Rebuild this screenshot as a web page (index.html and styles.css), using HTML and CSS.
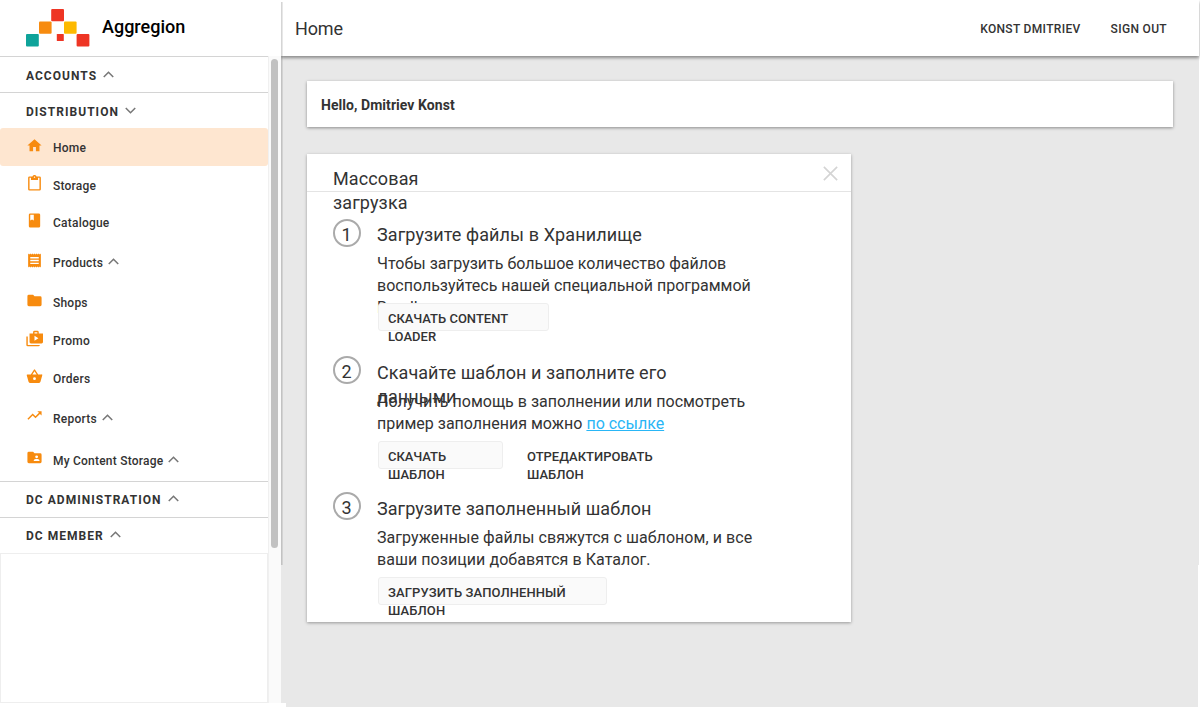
FILE: index.html
```html
<!DOCTYPE html>
<html lang="ru">
<head>
<meta charset="utf-8">
<title>Aggregion</title>
<link rel="stylesheet" href="styles.css">
</head>
<body>
<div class="app">
  <aside class="sidebar">
    <div class="brand">
      <svg class="brand-mark" width="64" height="38" viewBox="0 0 64 38">
        <rect x="25.2" y="0" width="12.8" height="12.3" rx="1" fill="#ee3524"/>
        <rect x="13" y="12.5" width="12.6" height="12.3" rx="1" fill="#f78b0f"/>
        <rect x="38" y="12.5" width="12.6" height="12.3" rx="1" fill="#fdb900"/>
        <rect x="0" y="25" width="12.8" height="12.6" rx="1" fill="#0fa39a"/>
        <rect x="30.8" y="25" width="7" height="7" rx="0.6" fill="#ee3524"/>
        <rect x="50.6" y="25" width="12.8" height="12.6" rx="1" fill="#ee3524"/>
      </svg>
      <span class="brand-name">Aggregion</span>
    </div>
    <div class="side-body">
      <nav class="nav">
        <div class="group">ACCOUNTS <svg class="chev" viewBox="0 0 10 6"><path d="M.7 5.3 5 1 9.3 5.3"/></svg></div>
        <div class="group">DISTRIBUTION <svg class="chev" viewBox="0 0 10 6"><path d="M.7.7 5 5 9.3.7"/></svg></div>
        <div class="item active"><svg class="ico" viewBox="0 0 24 24"><path d="M10 20v-6h4v6h5v-8h3L12 3 2 12h3v8z"/></svg>Home</div>
        <div class="item"><svg class="ico" viewBox="0 0 24 24"><path d="M19 2h-4.18C14.4.84 13.3 0 12 0S9.6.84 9.18 2H5a2 2 0 0 0-2 2v16a2 2 0 0 0 2 2h14a2 2 0 0 0 2-2V4a2 2 0 0 0-2-2zm-7 0a1 1 0 1 1 0 2 1 1 0 0 1 0-2zm7 18H5V4h2v3h10V4h2z"/></svg>Storage</div>
        <div class="item"><svg class="ico" viewBox="0 0 24 24"><path d="M18 2H6a2 2 0 0 0-2 2v16a2 2 0 0 0 2 2h12a2 2 0 0 0 2-2V4a2 2 0 0 0-2-2zM6 4h5v8l-2.500-1.500L6 12z"/></svg>Catalogue</div>
        <div class="item tall"><svg class="ico" viewBox="0 0 24 24"><path d="M18 17H6v-2h12zm0-4H6v-2h12zm0-4H6V7h12zM3 22l1.500-1.500L6 22l1.500-1.500L9 22l1.500-1.500L12 22l1.500-1.500L15 22l1.500-1.500L18 22l1.500-1.500L21 22V2l-1.500 1.500L18 2l-1.500 1.500L15 2l-1.500 1.500L12 2l-1.500 1.500L9 2 7.500 3.500 6 2 4.500 3.500 3 2z"/></svg>Products <svg class="chev" viewBox="0 0 10 6"><path d="M.7 5.300 5 1 9.300 5.300"/></svg></div>
        <div class="item"><svg class="ico" viewBox="0 0 24 24"><path d="M10 4H4a2 2 0 0 0-2 2v12a2 2 0 0 0 2 2h16a2 2 0 0 0 2-2V8a2 2 0 0 0-2-2h-8z"/></svg>Shops</div>
        <div class="item"><svg class="ico" viewBox="0 0 24 24"><path d="M2.500 9H.5v12a2 2 0 0 0 2 2h15a2 2 0 0 0 2-2h-17zM18 5V3a2 2 0 0 0-2-2h-4a2 2 0 0 0-2 2v2H5v12a2 2 0 0 0 2 2h15a2 2 0 0 0 2-2V5zm-6-2h4v2h-4zm0 12V8l5.500 3.500z"/></svg>Promo</div>
        <div class="item"><svg class="ico" viewBox="0 0 24 24"><path d="m17.210 9-4.380-6.560a1 1 0 0 0-1.660 0L6.790 9H2a1 1 0 0 0-.96 1.270l2.540 9.270A2 2 0 0 0 5.500 21h13a2 2 0 0 0 1.930-1.460l2.540-9.270A1 1 0 0 0 22 9zM9 9l3-4.400L15 9zm3 8a2 2 0 1 1 0-4 2 2 0 0 1 0 4z"/></svg>Orders</div>
        <div class="item tall"><svg class="ico" viewBox="0 0 24 24"><path d="m16 6 2.290 2.290-4.880 4.880-4-4L2 16.590 3.410 18l6-6 4 4 6.300-6.290L22 12V6z"/></svg>Reports <svg class="chev" viewBox="0 0 10 6"><path d="M.7 5.300 5 1 9.300 5.300"/></svg></div>
        <div class="item tall"><svg class="ico" viewBox="0 0 24 24"><path d="M20 6h-8l-2-2H4a2 2 0 0 0-2 2v12a2 2 0 0 0 2 2h16a2 2 0 0 0 2-2V8a2 2 0 0 0-2-2zm-5 3a2 2 0 1 1 0 4 2 2 0 0 1 0-4zm4 8h-8v-1c0-1.330 2.670-2 4-2s4 .67 4 2z"/></svg>My Content Storage <svg class="chev" viewBox="0 0 10 6"><path d="M.7 5.300 5 1 9.300 5.300"/></svg></div>
        <div class="group">DC ADMINISTRATION <svg class="chev" viewBox="0 0 10 6"><path d="M.7 5.300 5 1 9.300 5.300"/></svg></div>
        <div class="group">DC MEMBER <svg class="chev" viewBox="0 0 10 6"><path d="M.7 5.300 5 1 9.300 5.300"/></svg></div>
        <div class="blank"></div>
      </nav>
      <div class="track"><div class="thumb"></div></div>
    </div>
    <div class="edge-shadow"></div>
    <div class="corner"></div>
  </aside>
  <div class="main">
    <header class="topbar">
      <h1 class="page-title">Home</h1>
      <div class="user-links"><span>KONST DMITRIEV</span><span>SIGN OUT</span></div>
    </header>
    <main class="content-area">
      <section class="hello">Hello, Dmitriev Konst</section>
      <section class="card">
        <header class="card-head">
          <h2 class="card-title">Массовая загрузка</h2>
          <svg class="close" viewBox="0 0 14 14"><path d="M.8.8 13.200 13.200M13.200.8.8 13.200"/></svg>
        </header>
        <div class="step first">
          <div class="num">1</div>
          <div class="step-body">
            <h3 class="step-title">Загрузите файлы в Хранилище</h3>
            <p class="step-text">Чтобы загрузить большое количество файлов воспользуйтесь нашей специальной программой Bundle</p>
            <div class="actions"><div class="btn b1">СКАЧАТЬ CONTENT LOADER</div></div>
          </div>
        </div>
        <div class="step">
          <div class="num">2</div>
          <div class="step-body">
            <h3 class="step-title">Скачайте шаблон и заполните его данными</h3>
            <p class="step-text">Получить помощь в заполнении или посмотреть пример заполнения можно <a class="link">по ссылке</a></p>
            <div class="actions"><div class="btn b2">СКАЧАТЬ ШАБЛОН</div><div class="btn flat">ОТРЕДАКТИРОВАТЬ ШАБЛОН</div></div>
          </div>
        </div>
        <div class="step last">
          <div class="num">3</div>
          <div class="step-body">
            <h3 class="step-title">Загрузите заполненный шаблон</h3>
            <p class="step-text">Загруженные файлы свяжутся с шаблоном, и все ваши позиции добавятся в Каталог.</p>
            <div class="actions"><div class="btn b3">ЗАГРУЗИТЬ ЗАПОЛНЕННЫЙ ШАБЛОН</div></div>
          </div>
        </div>
      </section>
    </main>
  </div>
</div>
</body>
</html>
```
FILE: styles.css
```css
* { box-sizing: border-box; }
body { margin: 0; font-family: Roboto, sans-serif; color: #333; background: #fff; }
.app { display: flex; width: 1200px; height: 708px; overflow: hidden; }

.sidebar { position: relative; display: flex; flex-direction: column; width: 281px; height: 708px; background: #fff; }
.brand { display: flex; height: 56px; padding: 9px 0 0 26px; }
.brand-mark { flex: none; }
.brand-name { margin-left: 12px; font-size: 18px; font-weight: 500; line-height: 36px; color: #000; }
.side-body { display: flex; height: 647px; }
.nav { display: flex; flex-direction: column; width: 268px; }
.group { display: flex; flex: none; align-items: center; height: 36px; padding: 3px 0 0 26px; border-top: 1px solid #d4d4d4; font-size: 12px; font-weight: 700; letter-spacing: 1.03px; }
.item + .group, .item ~ .group { padding-top: 2px; }
.chev { width: 11px; height: 7px; margin: -3px 0 0 6px; fill: none; stroke: #777; stroke-width: 1.4; }
.item { display: flex; flex: none; align-items: center; height: 37.8px; padding: 2px 0 0 26px; font-size: 12px; font-weight: 500; letter-spacing: 0.22px; }
.item.tall { height: 42px; }
.item .chev { margin-left: 5px; }
.ico { width: 17px; height: 17px; margin: -5px 10px 0 0; fill: #f78b0f; }
.tall .ico { margin-top: -6px; }
.active { border-radius: 3px; background: #fee6d0; }
.blank { flex: 1; border: 1px solid #eee; }
.track { width: 13px; padding: 3px 3px 0 2px; background: #fafafa; border-left: 1px solid #f0f0f0; }
.thumb { width: 7px; height: 489px; border-radius: 4px; background: #c1c1c1; }
.edge-shadow { position: absolute; left: 281px; top: 2px; width: 2px; height: 563px; background: linear-gradient(90deg, rgba(0,0,0,.2), rgba(0,0,0,.06)); z-index: 2; }
.corner { position: absolute; left: 268px; top: 703px; width: 18px; height: 5px; background: #fff; z-index: 2; }

.main { display: flex; flex-direction: column; width: 918px; height: 707px; background: linear-gradient(#fff, #fff) right bottom / 1px 142px no-repeat #e8e8e8; }
.topbar { display: flex; justify-content: space-between; align-items: center; height: 56px; padding: 0 32px 0 14px; background: #fff; box-shadow: 0 2px 3px rgba(0,0,0,.4); }
.page-title { margin: 2px 0 0; font-size: 18px; font-weight: 400; line-height: 22px; letter-spacing: -0.15px; }
.user-links { display: flex; gap: 30px; padding-top: 1px; font-size: 12px; font-weight: 500; letter-spacing: 0.33px; }
.content-area { padding: 25px 26px; }
.hello { height: 46px; padding-left: 14px; background: #fff; font-size: 14px; font-weight: 700; line-height: 48px; letter-spacing: 0.05px; box-shadow: 0 1px 3px rgba(0,0,0,.4); }
.card { width: 544px; height: 468px; margin-top: 27px; background: #fff; box-shadow: 0 1px 3px rgba(0,0,0,.35); }
.card-head { display: flex; justify-content: space-between; height: 38px; padding: 12px 13px 0 26px; border-bottom: 1px solid #e4e4e4; }
.card-title { width: 100px; margin: 0; padding-top: 1px; font-size: 18px; font-weight: 400; line-height: 24px; letter-spacing: 0.12px; }
.close { flex: none; width: 15px; height: 15px; fill: none; stroke: #d4d4d4; stroke-width: 1.5; }
.step { display: flex; height: 136px; padding-left: 25.5px; }
.step.first { height: 164px; padding-top: 27px; }
.num { width: 28px; height: 28px; border: 2px solid #aaa; border-radius: 50%; font-size: 18px; line-height: 28px; text-align: center; }
.step-body { width: 385px; margin-left: 16.5px; }
.step-title { width: 340px; height: 35px; margin: 0; padding-top: 5px; font-size: 18px; font-weight: 400; line-height: 24px; letter-spacing: 0.06px; }
.first .step-title { height: 34px; padding-top: 4px; letter-spacing: 0.1px; }
.step-text { height: 50px; margin: 0; font-size: 16px; line-height: 22px; }
.last .step-text { letter-spacing: 0.06px; }
.link { color: #29b6f6; text-decoration: underline; }
.actions { display: flex; gap: 13px; padding-left: 1px; }
.btn { height: 28px; padding: 6px 9px 0 9px; border: 1px solid #eee; border-radius: 3px; background: #fafafa; font-size: 13px; font-weight: 500; line-height: 18px; }
.b1 { width: 171px; }
.b2 { width: 125px; }
.b3 { width: 229px; letter-spacing: 0.1px; }
.flat { width: 150px; padding-left: 10px; border-color: transparent; background: none; }
```
